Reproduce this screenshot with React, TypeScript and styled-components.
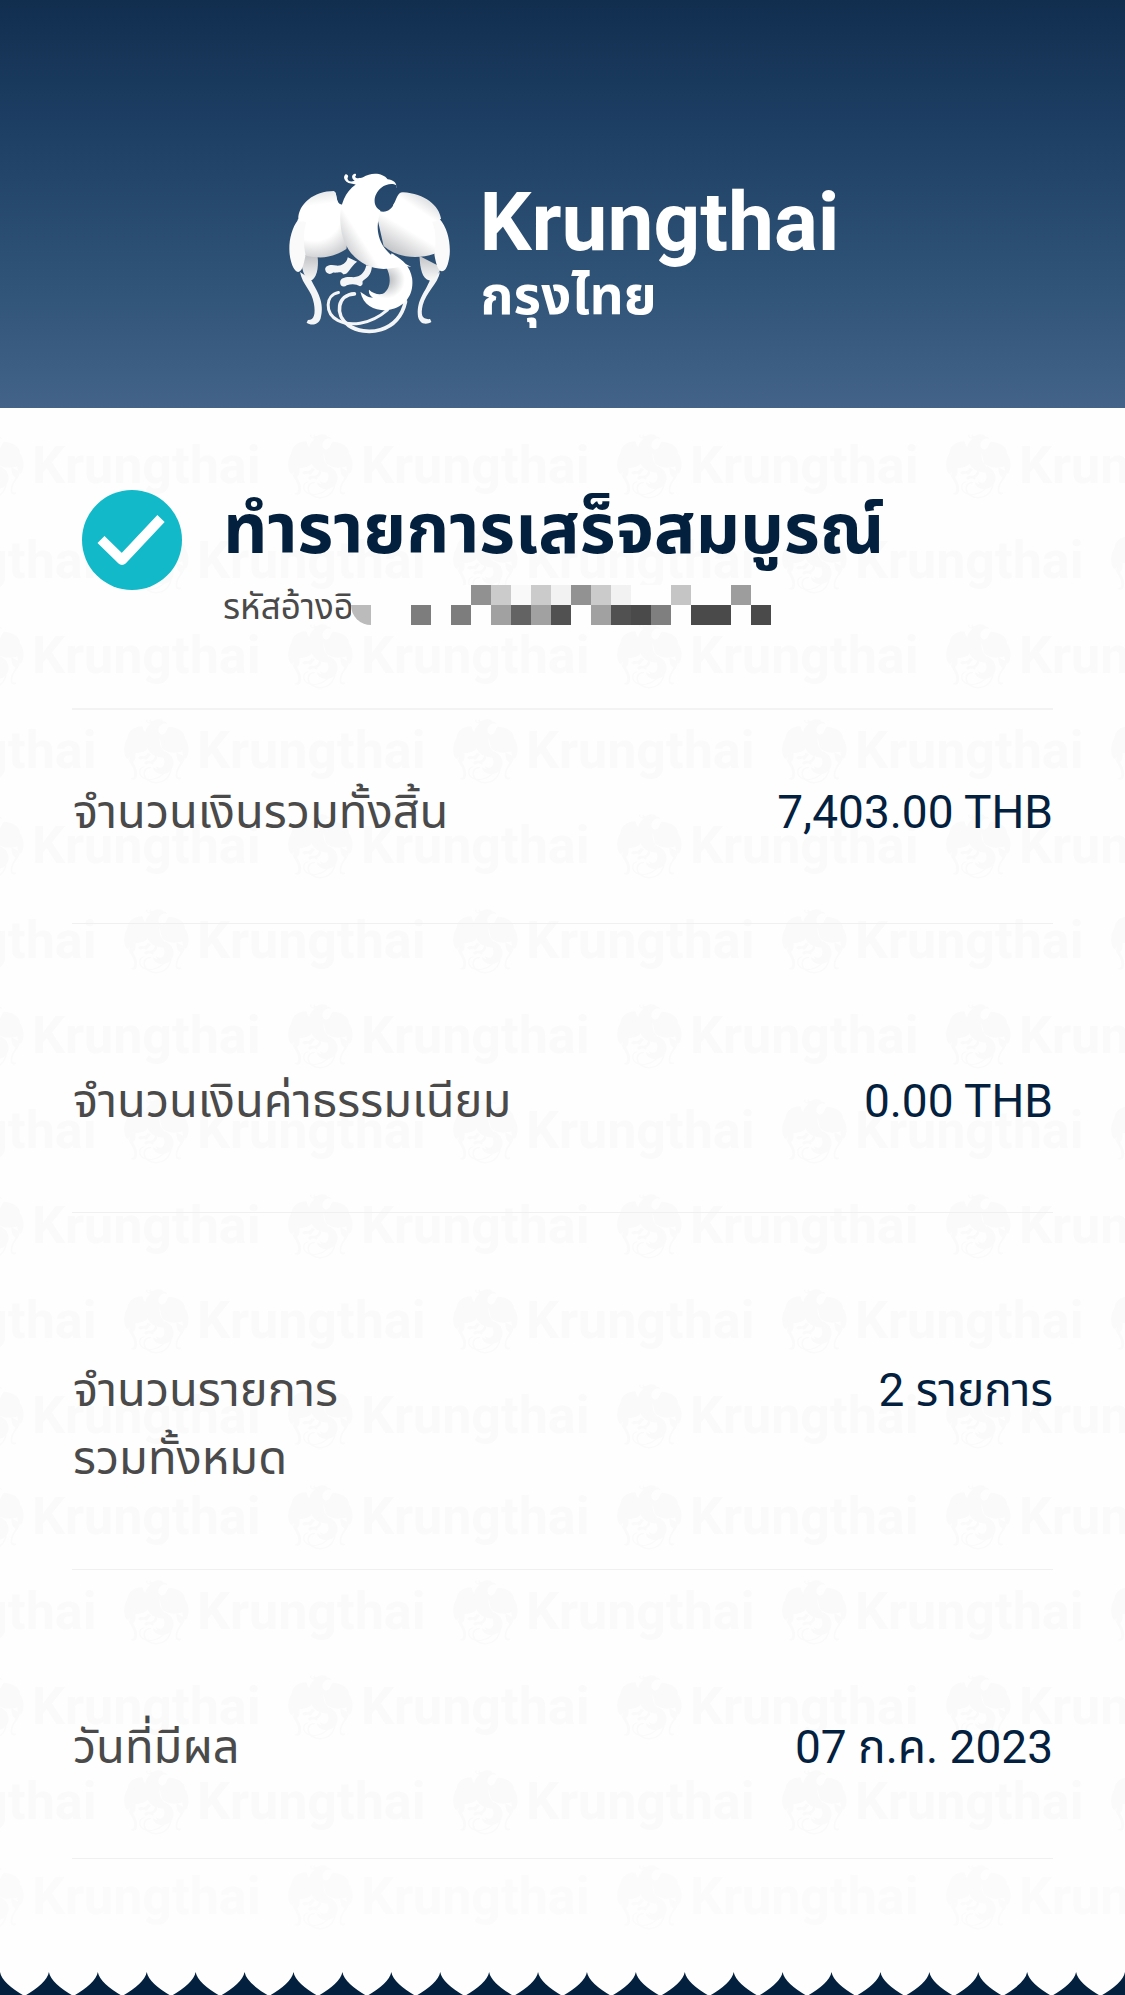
import React from "react";
import styled, { createGlobalStyle } from "styled-components";

const latin = `Roboto, "Noto Sans Thai", sans-serif`;
const thai = `"Noto Sans Thai", "Noto Sans", sans-serif`;

const GlobalStyle = createGlobalStyle`
  *, *::before, *::after { box-sizing: border-box; }
  body { margin: 0; background: #fefefe; font-family: ${thai}; }
  h1, p, dl, dt, dd { margin: 0; }
`;

const Page = styled.div`
  display: flex;
  flex-direction: column;
  width: 100%;
`;

const Header = styled.header`
  display: flex;
  justify-content: center;
  padding: 173px 0 73px;
  background: linear-gradient(180deg, #112e4f 0%, #1f4166 35%, #315479 72%, #436488 100%);
  color: #fff;
`;

const Brand = styled.div`
  display: flex;
  gap: 28px;
  height: 162px;
  padding-left: 4px;
`;

const BrandText = styled.div`
  display: flex;
  flex-direction: column;
  padding-top: 7px;
`;

const BrandName = styled.span`
  font: 700 82px/84px ${latin};
`;

const BrandThai = styled.span`
  padding-left: 1px;
  font: 700 53px/68px ${thai};
`;

const Slip = styled.main`
  position: relative;
  overflow: hidden;
  padding: 72px 72px 113px;
  background: #fefefe;
`;

const Watermark = styled.div`
  position: absolute;
  inset: 26px 0 0;
  overflow: hidden;
  color: #fafafa;
`;

const MarkGroup = styled.div`
  display: flex;
  flex-direction: column;
  margin-bottom: 6px;

  &:last-child > :last-child { opacity: 0.5; }
`;

const MarkRow = styled.div<{ $shifted: boolean }>`
  display: flex;
  height: 95px;
  margin-left: ${(p) => (p.$shifted ? "-205px" : "-41px")};
`;

const Mark = styled.div`
  display: flex;
  flex: none;
  gap: 8px;
  width: 329px;
  font: 700 52px/64px ${latin};
`;

const Content = styled.div`
  position: relative;
`;

const Status = styled.section`
  display: flex;
  gap: 41px;
  padding: 10px 10px 76px;
`;

const StatusText = styled.div`
  display: flex;
  flex-direction: column;
`;

const Title = styled.h1`
  color: #03213f;
  font: 700 69px/84px ${thai};
  white-space: nowrap;
`;

const Reference = styled.p`
  display: flex;
  align-items: flex-start;
  height: 58px;
  color: #4a4a4a;
  font: 400 35px/70px ${thai};
`;

const Mosaic = styled.span`
  display: grid;
  grid-template-columns: repeat(21, 20px);
  grid-auto-rows: 20px;
  margin: 11px 0 0 -3px;
  background: #fefefe;
`;

const Cell = styled.span<{ $tone: string; $clipped?: boolean }>`
  background: ${(p) => p.$tone};
  border-bottom-left-radius: ${(p) => (p.$clipped ? "100%" : "0")};
`;

const Details = styled.dl`
  border-top: 2px solid #f3f3f3;
`;

const Row = styled.div<{ $compact?: boolean }>`
  display: flex;
  justify-content: space-between;
  align-items: baseline;
  padding: ${(p) => (p.$compact ? "70px" : "145px")} 0 75px;
  border-bottom: 1px solid #f0f0f0;
`;

const Label = styled.dt`
  padding-left: 1px;
  color: #4a4a4a;
  font: 400 47px/68px ${thai};
  white-space: pre-line;
`;

const Value = styled.dd`
  color: #03213f;
  font: 400 46px/56px ${latin};
`;

const Scallop = styled.svg`
  display: block;
  width: 100%;
  height: 24px;
`;

function Phoenix({ size, shaded }: { size: number; shaded?: boolean }) {
  const fill = (id: string) => (shaded ? `url(#${id})` : "currentColor");
  const line = shaded ? "#f4f5f6" : "currentColor";
  return (
    <svg width={size} height={size} viewBox="60 68 486 488" aria-hidden="true">
      {shaded && (
        <defs>
          <radialGradient id="wingLeft" gradientUnits="userSpaceOnUse" cx="135" cy="190" r="150">
            <stop offset="0.55" stopColor="#fff" />
            <stop offset="1" stopColor="#c4c5c8" />
          </radialGradient>
          <linearGradient id="wingRight" gradientUnits="userSpaceOnUse" x1="450" y1="190" x2="375" y2="315">
            <stop offset="0.4" stopColor="#fff" />
            <stop offset="1" stopColor="#bfc0c3" />
          </linearGradient>
          <linearGradient id="body" gradientUnits="userSpaceOnUse" x1="214" y1="270" x2="300" y2="215">
            <stop offset="0" stopColor="#cfd0d2" />
            <stop offset="0.55" stopColor="#fff" />
          </linearGradient>
          <linearGradient id="capLeft" gradientUnits="userSpaceOnUse" x1="140" y1="130" x2="150" y2="215">
            <stop offset="0" stopColor="#e9eaeb" />
            <stop offset="0.4" stopColor="#fff" />
          </linearGradient>
          <linearGradient id="capRight" gradientUnits="userSpaceOnUse" x1="470" y1="150" x2="430" y2="210">
            <stop offset="0" stopColor="#e3e4e6" />
            <stop offset="0.5" stopColor="#fff" />
          </linearGradient>
          <linearGradient id="tip" gradientUnits="userSpaceOnUse" x1="0" y1="310" x2="0" y2="400">
            <stop offset="0" stopColor="#bcbec1" />
            <stop offset="1" stopColor="#fff" />
          </linearGradient>
          <radialGradient id="tail" gradientUnits="userSpaceOnUse" cx="352" cy="390" r="56">
            <stop offset="0.1" stopColor="#b8babd" />
            <stop offset="1" stopColor="#fff" />
          </radialGradient>
        </defs>
      )}
      <g fill="none" stroke={line} strokeLinecap="round">
        <path d="M208 428c-40 8-42 62-2 84 35 18 95 15 150-32" strokeWidth="9" />
        <path d="M256 432c-50 2-62 62-18 95 50 34 150 25 172-72" strokeWidth="11" />
      </g>
      <path fill={line} d="M92 366c8 40 36 55 42 95 5 30 2 50-18 50l-4 8c14 10 36 6 42-12 14-50-10-82-30-120z" />
      <path fill={line} d="M514 366c-8 38-42 60-52 100-8 34 0 44 22 42l4 9c-20 12-40 2-41-22-2-50 22-66 38-108z" />
      <path fill={fill("tip")} d="M98 318c-4 36 6 68 26 74 16-4 26-34 21-74z" />
      <path fill={fill("tip")} d="M452 318c2 40 8 68 30 74 16-2 28-20 36-40z" />
      <path fill={fill("wingLeft")} d="M198 125c6 8 2 36 20 38l22 60-8 74c-40 26-84 32-116 18z" />
      <path fill={fill("wingLeft")} d="M85 208l120-34 24 120c-42 30-92 32-126 22z" />
      <path fill={fill("wingRight")} d="M318 172c24 26 52 6 58-14l134 50-8 102c-50 18-116 16-158-22z" />
      <path fill={shaded ? "#fafafa" : "currentColor"} d="M87 208c-28 36-32 92-22 126 5 20 14 32 22 32 14 0 18-34 22-50-8-38-6-74 2-100z" />
      <path fill={shaded ? "#fafafa" : "currentColor"} d="M512 206c24 26 34 70 31 108-4 32-12 50-24 50-12-2-18-26-22-50 6-46 4-74-7-100z" />
      <path fill={fill("capLeft")} d="M87 206c0-44 46-84 108-84 10 10 4 32 18 44-30 36-70 48-126 48z" />
      <path fill={fill("capRight")} d="M372 166c12-18 12-40 30-40 66 4 110 40 115 80-12 12-44 12-80-2-30-10-52-26-65-38z" />
      <path fill={line} d="M236 322c-4 20-20 26-34 25-18-5-35 0-34 12 2 14 16 16 24 9 16 2 24-6 30 5 16 2 20-22 42-38zM292 346c-6 24-18 34-38 36-20-3-40 0-41 14-1 14 12 18 20 10 16-5 28-4 40 3 12-4 6-12 8-16 20-12 26-24 28-44z" />
      <path fill={fill("tail")} d="M352 352c16 30 14 66-10 80-12 4-30 0-42-12-2 10 4 18 12 24-14 0-24-8-38-18 8 40 40 56 76 56 56-6 86-44 80-96-6-36-26-56-62-76z" />
      <path fill={fill("body")} d="M382 115c4-16-8-26-26-28-14-20-50-22-74-6-14 4-20 4-24-2 6-6 2-11-3-8-10 4-6 16 2 20-14 6-22 0-22-8 6-6-2-14-7-10-8 8 0 22 14 26l18 4c-36 24-50 72-46 116 4 78 56 136 130 138 30 0 60-14 84-6-46-22-86-46-98-92-8-30-2-50 4-78-26-14-20-50 2-68 18-14 36-14 46-8z" />
    </svg>
  );
}

function CheckMark() {
  return (
    <svg width="100" height="100" viewBox="0 0 100 100" role="img" aria-label="สำเร็จ">
      <circle cx="50" cy="50" r="50" fill="#12b9c9" />
      <path d="M19 49.500L40 70L79 28.500" fill="none" stroke="#fff" strokeWidth="10" strokeLinejoin="round" />
    </svg>
  );
}

const cells: [number, number, string][] = [
  [7, 1, "#919191"], [8, 1, "#cbcbcb"], [9, 1, "#f9f9f9"], [10, 1, "#cbcbcb"], [11, 1, "#f2f2f2"],
  [12, 1, "#929292"], [13, 1, "#cbcbcb"], [14, 1, "#f2f2f2"], [17, 1, "#c5c5c5"], [20, 1, "#9d9d9d"],
  [1, 2, "#bbbbbb"], [4, 2, "#7d7d7d"], [6, 2, "#7d7d7d"], [8, 2, "#a1a1a1"], [9, 2, "#636363"],
  [10, 2, "#a1a1a1"], [11, 2, "#515151"], [13, 2, "#a1a1a1"], [14, 2, "#515151"], [15, 2, "#4a4a4a"],
  [16, 2, "#7f7f7f"], [18, 2, "#4a4a4a"], [19, 2, "#4a4a4a"], [21, 2, "#4a4a4a"],
];

function RedactedCode() {
  const slots = Array.from({ length: 42 }, (_, i) => {
    const hit = cells.find(([c, r]) => c === (i % 21) + 1 && r === Math.floor(i / 21) + 1);
    return hit ? hit[2] : "transparent";
  });
  return (
    <Mosaic aria-hidden="true">
      {slots.map((tone, i) => (
        <Cell key={i} $tone={tone} $clipped={i === 21} />
      ))}
    </Mosaic>
  );
}

function MarkLines({ count }: { count: number }) {
  return (
    <MarkGroup>
      {Array.from({ length: count }, (_, r) => (
        <MarkRow key={r} $shifted={r % 2 === 1}>
          {Array.from({ length: 5 }, (_, c) => (
            <Mark key={c}>
              <Phoenix size={65} />
              Krungthai
            </Mark>
          ))}
        </MarkRow>
      ))}
    </MarkGroup>
  );
}

const rows = [
  { label: "จำนวนเงินรวมทั้งสิ้น", value: "7,403.00 THB" },
  { label: "จำนวนเงินค่าธรรมเนียม", value: "0.00 THB" },
  { label: "จำนวนรายการ\nรวมทั้งหมด", value: "2 รายการ" },
  { label: "วันที่มีผล", value: "07 ก.ค. 2023" },
];

const teeth = 23;
const step = 1125 / teeth;
const scallopPath = Array.from({ length: teeth }, (_, i) => {
  const x = i * step;
  return `M${x} 0Q${x + 2} 11 ${x + step / 2} 24H${x}ZM${x + step} 0Q${x + step - 2} 11 ${x + step / 2} 24H${x + step}Z`;
}).join("");

export default function App() {
  return (
    <Page>
      <GlobalStyle />
      <Header>
        <Brand>
          <Phoenix size={162} shaded />
          <BrandText>
            <BrandName>Krungthai</BrandName>
            <BrandThai>กรุงไทย</BrandThai>
          </BrandText>
        </Brand>
      </Header>
      <Slip>
        <Watermark aria-hidden="true">
          <MarkLines count={11} />
          <MarkLines count={5} />
        </Watermark>
        <Content>
          <Status>
            <CheckMark />
            <StatusText>
              <Title>ทำรายการเสร็จสมบูรณ์</Title>
              <Reference>
                รหัสอ้างอิ
                <RedactedCode />
              </Reference>
            </StatusText>
          </Status>
          <Details>
            {rows.map((row, i) => (
              <Row key={row.label} $compact={i === 0}>
                <Label>{row.label}</Label>
                <Value>{row.value}</Value>
              </Row>
            ))}
          </Details>
        </Content>
      </Slip>
      <Scallop viewBox="0 0 1125 24" preserveAspectRatio="none" aria-hidden="true">
        <path d={scallopPath} fill="#03213f" />
      </Scallop>
    </Page>
  );
}
